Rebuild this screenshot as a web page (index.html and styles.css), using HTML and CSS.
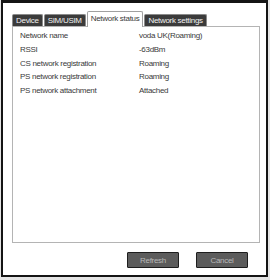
FILE: index.html
```html
<!DOCTYPE html>
<html lang="en">
<head>
    <meta charset="UTF-8">
    <title>Network status</title>
    <link rel="stylesheet" href="styles.css">
</head>
<body>
    <!-- Dialog -->
    <div class="window">
        <div class="tabs">
            <div class="tab">Device</div>
            <div class="tab">SIM/USIM</div>
            <div class="tab active">Network status</div>
            <div class="tab">Network settings</div>
        </div>

        <div class="panel">
            <div class="row"><span class="label">Network name</span><span class="value">voda UK(Roaming)</span></div>
            <div class="row"><span class="label">RSSI</span><span class="value">-63dBm</span></div>
            <div class="row"><span class="label">CS network registration</span><span class="value">Roaming</span></div>
            <div class="row"><span class="label">PS network registration</span><span class="value">Roaming</span></div>
            <div class="row"><span class="label">PS network attachment</span><span class="value">Attached</span></div>
        </div>

        <div class="buttons">
            <button class="btn">Refresh</button>
            <button class="btn">Cancel</button>
        </div>
    </div>
</body>
</html>
```

FILE: styles.css
```css
* {
    margin: 0;
    padding: 0;
    box-sizing: border-box;
}

body {
    font-family: 'Liberation Sans', Arial, sans-serif;
    font-size: 8px;
    letter-spacing: -0.3px;
    color: #3a3a3a;
    background-color: #e4e4e4;
    width: 270px;
    height: 280px;
}

/* Janela */
.window {
    margin-left: 1px;
    width: 267px;
    height: 277px;
    background-color: #ffffff;
    border: 2px solid #141414;
    border-top-width: 3px;
    display: flex;
    flex-direction: column;
}

/* Abas */
.tabs {
    display: flex;
    align-items: flex-end;
    margin: 8px 0 -1px 9px;
    height: 16px;
}

.tab {
    height: 13px;
    line-height: 12px;
    padding: 0 3px;
    background-color: #3b3b3b;
    color: #f2f2f2;
    border: 1px solid #8a8a8a;
    border-bottom: none;
    border-radius: 2px 2px 0 0;
    margin-right: 1px;
}

.tab.active {
    position: relative;
    height: 16px;
    line-height: 14px;
    background-color: #ffffff;
    color: #3a3a3a;
    border-color: #a0a0a0;
}

/* Painel */
.panel {
    margin: 0 6px 0 9px;
    height: 217px;
    border: 1px solid #b4b4b4;
    padding: 2px 7px 0;
}

.row {
    display: grid;
    grid-template-columns: 119px 1fr;
    height: 13.75px;
    line-height: 13.75px;
}

/* Botões */
.buttons {
    display: flex;
    justify-content: flex-end;
    gap: 17px;
    margin-top: 9px;
    padding-right: 18px;
}

.btn {
    width: 52px;
    height: 16px;
    font-family: inherit;
    font-size: 8px;
    letter-spacing: -0.3px;
    color: #b8b8b8;
    background-color: #5c5c5c;
    border: 1px solid #1e1e1e;
    border-radius: 1px;
}
```
